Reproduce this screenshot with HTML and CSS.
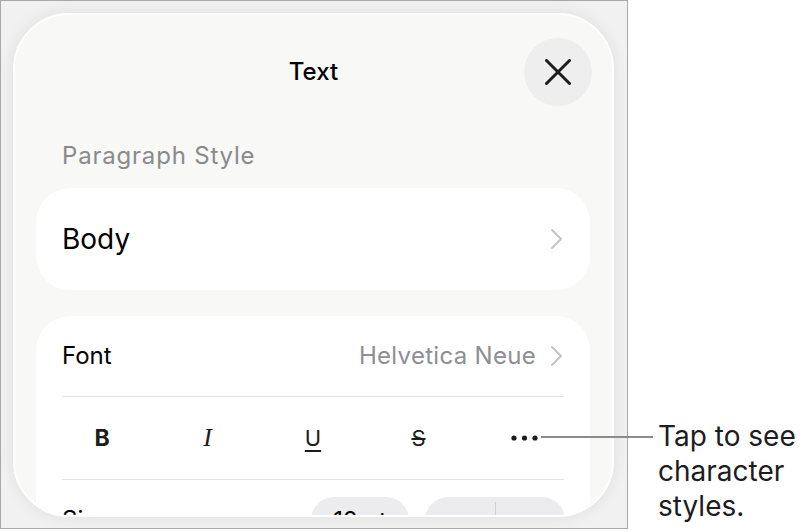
FILE: index.html
```html
<!DOCTYPE html>
<html lang="en">
<head>
<meta charset="utf-8">
<title>Text</title>
<link rel="stylesheet" href="styles.css">
</head>
<body>
<div class="page">
  <div class="device">
    <div class="sheet">
      <header class="sheet-header">
        <span class="spacer"></span>
        <h1 class="title">Text</h1>
        <div class="close-wrap">
          <button class="close" type="button" aria-label="Close">
            <svg width="26" height="26" viewBox="0 0 26 26"><path d="M1.5 1.5 L24.5 24.5 M24.5 1.5 L1.5 24.5" fill="none" stroke="#1c1c1e" stroke-width="3" stroke-linecap="round"/></svg>
          </button>
        </div>
      </header>

      <div class="section-label">Paragraph Style</div>

      <div class="card card-body">
        <span class="body-label">Body</span>
        <svg class="chev" width="13" height="22" viewBox="0 0 13 22"><path d="M2 2 L11 11 L2 20" fill="none" stroke="#c4c4c7" stroke-width="2" stroke-linecap="round" stroke-linejoin="round"/></svg>
      </div>

      <div class="card card-font">
        <div class="row row-font">
          <span class="row-label">Font</span>
          <span class="row-value">Helvetica Neue
            <svg class="chev" width="13" height="22" viewBox="0 0 13 22"><path d="M2 2 L11 11 L2 20" fill="none" stroke="#c4c4c7" stroke-width="2" stroke-linecap="round" stroke-linejoin="round"/></svg>
          </span>
        </div>
        <div class="sep"></div>
        <div class="row row-styles">
          <span class="sbtn s-bold">B</span>
          <span class="sbtn s-italic">I</span>
          <span class="sbtn s-under">U</span>
          <span class="sbtn s-strike">S</span>
          <span class="sbtn s-more">
            <svg width="27" height="6" viewBox="0 0 27 6"><circle cx="3" cy="3" r="2.6" fill="#1c1c1e"/><circle cx="13.5" cy="3" r="2.6" fill="#1c1c1e"/><circle cx="24" cy="3" r="2.6" fill="#1c1c1e"/></svg>
          </span>
        </div>
        <div class="sep"></div>
        <div class="row row-size">
          <span class="row-label">Size</span>
          <div class="size-controls">
            <div class="pill">12 pt</div>
            <div class="stepper">
              <span class="step">−</span>
              <span class="step-div"></span>
              <span class="step">+</span>
            </div>
          </div>
        </div>
      </div>
    </div>
  </div>
  <div class="callout">Tap to see<br>character<br>styles.</div>
  <div class="leader"></div>
</div>
</body>
</html>
```

FILE: styles.css
```css
html, body {
  margin: 0;
  padding: 0;
  background: #ffffff;
}

body {
  font-family: Inter, "Liberation Sans", sans-serif;
  color: #000;
}

.page {
  position: relative;
  display: flex;
  align-items: flex-start;
  width: 809px;
  height: 532px;
}

.device {
  box-sizing: border-box;
  width: 628px;
  height: 529px;
  border: 1px solid #a9a9a9;
  background: #f1f1f1;
  padding: 12px 0 0 12px;
  overflow: hidden;
  flex-shrink: 0;
}

.sheet {
  box-sizing: border-box;
  width: 601px;
  height: 504px;
  border: 2px solid #ffffff;
  border-radius: 56px;
  background: #f8f8f7;
  overflow: hidden;
  box-shadow: 0 0 16px rgba(0, 0, 0, 0.08);
}

.sheet-header {
  height: 112px;
  display: grid;
  grid-template-columns: 1fr auto 1fr;
  align-items: center;
}

.title {
  margin: 0;
  font-size: 24px;
  font-weight: 500;
  line-height: 30px;
  color: #000;
  padding-top: 2px;
}

.close-wrap {
  display: flex;
  justify-content: flex-end;
  padding-right: 20px;
}

.close {
  width: 68px;
  height: 68px;
  border: none;
  border-radius: 50%;
  background: #eeeeee;
  padding: 0;
  display: flex;
  align-items: center;
  justify-content: center;
  margin-top: 2px;
}

.section-label {
  margin-top: 14px;
  padding-left: 47px;
  font-size: 24px;
  line-height: 30px;
  letter-spacing: 0.8px;
  color: #8a8a8e;
}

.card {
  margin-left: 21px;
  width: 554px;
  background: #ffffff;
  border-radius: 34px;
}

.card-body {
  margin-top: 17px;
  height: 102px;
  box-sizing: border-box;
  padding: 0 27px 0 26px;
  display: flex;
  align-items: center;
  justify-content: space-between;
}

.body-label {
  font-size: 28px;
  line-height: 34px;
}

.chev {
  display: block;
}

.card-font {
  margin-top: 26px;
  height: 300px;
}

.row {
  display: flex;
  align-items: center;
  box-sizing: border-box;
}

.row-font {
  height: 80px;
  padding: 0 27px 0 26px;
  justify-content: space-between;
}

.row-label {
  font-size: 24px;
  line-height: 30px;
}

.row-value {
  display: flex;
  align-items: center;
  gap: 14px;
  font-size: 24px;
  line-height: 30px;
  letter-spacing: 0.3px;
  color: #8e8e93;
}

.sep {
  height: 1px;
  margin: 0 26px;
  background: #e4e4e6;
}

.row-styles {
  height: 82px;
  padding: 0 46px;
  justify-content: space-between;
}

.sbtn {
  width: 40px;
  display: flex;
  justify-content: center;
  align-items: center;
  color: #1c1c1e;
  line-height: 30px;
}

.s-bold {
  font-size: 23px;
  font-weight: 700;
}

.s-italic {
  font-family: "Liberation Serif", serif;
  font-style: italic;
  font-size: 26px;
}

.s-under {
  font-size: 22px;
  text-decoration: underline;
  text-decoration-thickness: 1.5px;
  text-underline-offset: 4px;
}

.s-strike {
  font-size: 22px;
  text-decoration: line-through;
  text-decoration-thickness: 1.5px;
}

.row-size {
  height: 80px;
  padding: 0 25px 0 26px;
  justify-content: space-between;
}

.size-controls {
  display: flex;
  gap: 16px;
}

.pill {
  width: 98px;
  height: 46px;
  border-radius: 23px;
  background: #ececee;
  display: flex;
  align-items: center;
  justify-content: center;
  font-size: 24px;
}

.stepper {
  width: 140px;
  height: 46px;
  border-radius: 23px;
  background: #ececee;
  display: flex;
  align-items: center;
}

.step {
  flex: 1;
  text-align: center;
  font-size: 28px;
  line-height: 30px;
  color: #000;
}

.step-div {
  width: 1px;
  height: 36px;
  background: #d2d2d4;
}

.callout {
  margin-left: 30px;
  margin-top: 419px;
  font-size: 28px;
  line-height: 35px;
  color: #1d1d1f;
}

.leader {
  position: absolute;
  left: 541px;
  top: 436px;
  width: 112px;
  height: 2px;
  background: #8b8b8b;
}
```
